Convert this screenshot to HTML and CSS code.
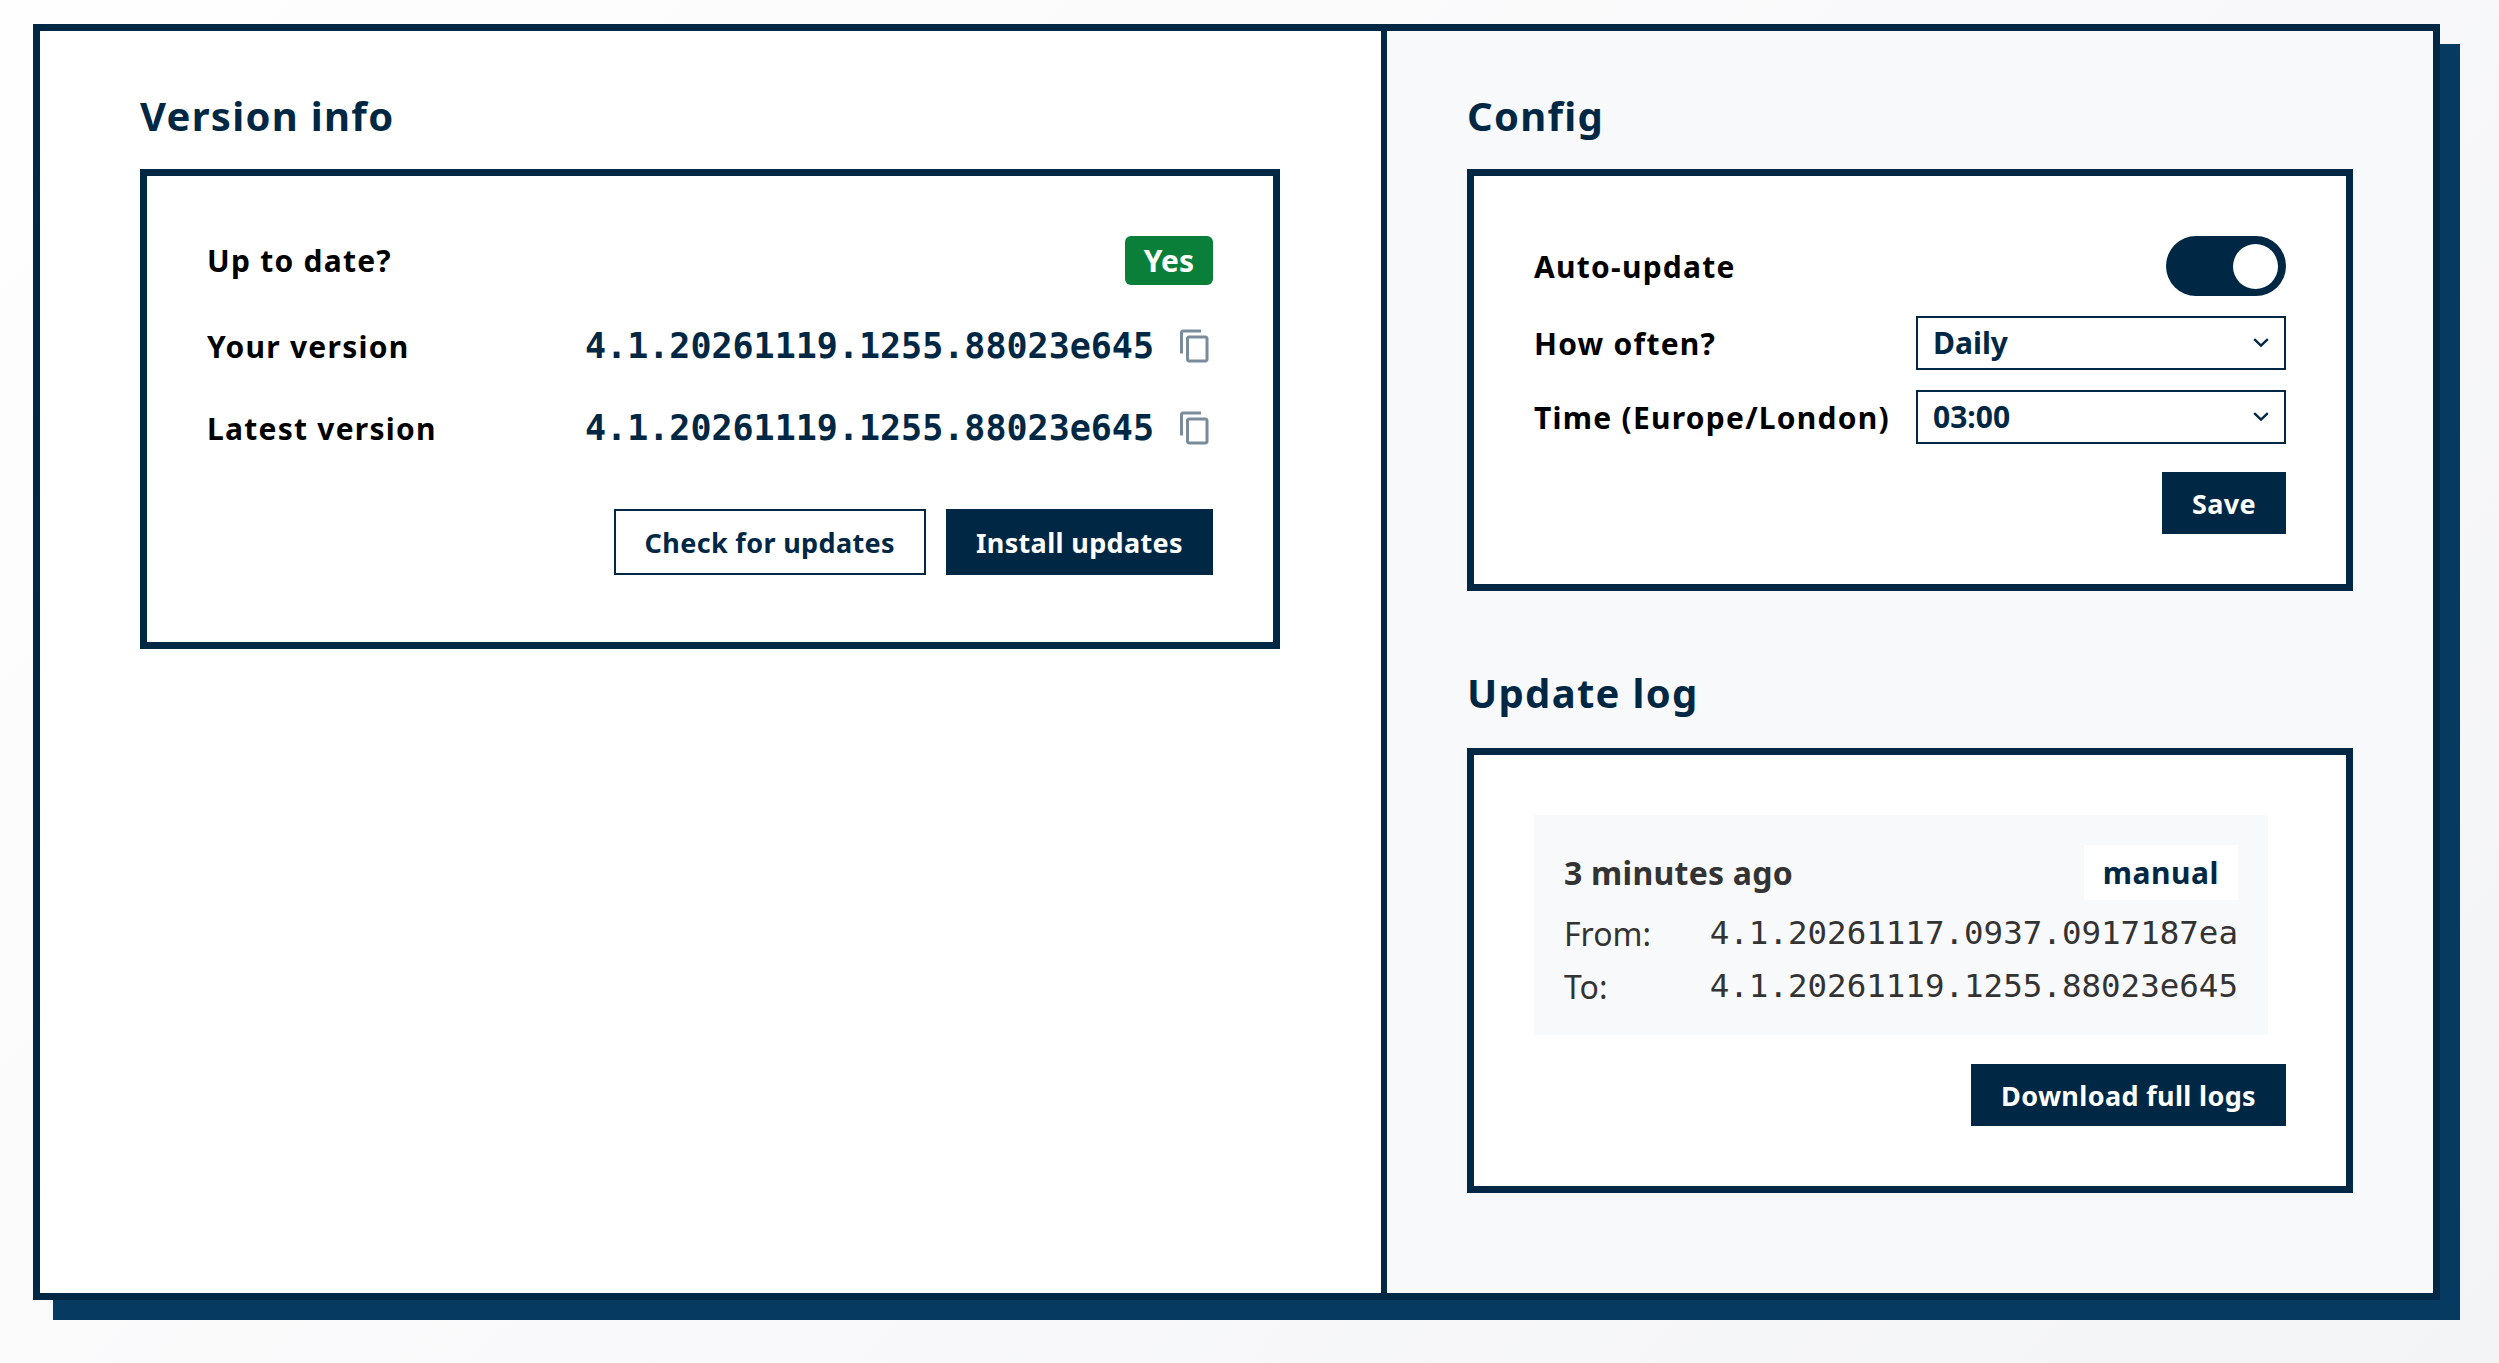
FILE: index.html
```html
<!DOCTYPE html>
<html lang="en">
<head>
<meta charset="utf-8">
<title>Updates</title>
<link rel="stylesheet" href="styles.css">
</head>
<body>
<main class="shell">
  <section class="pane pane-left">
    <h2 class="title">Version info</h2>
    <div class="box box-version">
      <div class="row row-first">
        <span class="label">Up to date?</span>
        <span class="badge">Yes</span>
      </div>
      <div class="row">
        <span class="label">Your version</span>
        <span class="value"><code class="mono">4.1.20261119.1255.88023e645</code>
          <svg class="copy" viewBox="0 0 24 24"><path d="M16 1H4c-1.1 0-2 .9-2 2v14h2V3h12V1zm3 4H8c-1.1 0-2 .9-2 2v14c0 1.1.9 2 2 2h11c1.1 0 2-.9 2-2V7c0-1.1-.9-2-2-2zm0 16H8V7h11v14z"/></svg>
        </span>
      </div>
      <div class="row">
        <span class="label">Latest version</span>
        <span class="value"><code class="mono">4.1.20261119.1255.88023e645</code>
          <svg class="copy" viewBox="0 0 24 24"><path d="M16 1H4c-1.1 0-2 .9-2 2v14h2V3h12V1zm3 4H8c-1.1 0-2 .9-2 2v14c0 1.1.9 2 2 2h11c1.1 0 2-.9 2-2V7c0-1.1-.9-2-2-2zm0 16H8V7h11v14z"/></svg>
        </span>
      </div>
      <div class="actions actions-version">
        <button class="btn btn-outline">Check for updates</button>
        <button class="btn btn-solid btn-tall">Install updates</button>
      </div>
    </div>
  </section>
  <section class="pane pane-right">
    <h2 class="title">Config</h2>
    <div class="box box-config">
      <div class="config-row config-toggle">
        <span class="label">Auto-update</span>
        <span class="toggle"><span class="knob"></span></span>
      </div>
      <div class="config-row config-gap">
        <span class="label">How often?</span>
        <span class="select"><span>Daily</span>
          <svg class="chev" viewBox="0 0 16 9"><path d="M1.2 1.2L8 7.6l6.8-6.4"/></svg></span>
      </div>
      <div class="config-row config-gap">
        <span class="label">Time (Europe/London)</span>
        <span class="select"><span>03:00</span>
          <svg class="chev" viewBox="0 0 16 9"><path d="M1.2 1.2L8 7.6l6.8-6.4"/></svg></span>
      </div>
      <div class="actions actions-config">
        <button class="btn btn-solid btn-save">Save</button>
      </div>
    </div>
    <h2 class="title title-log">Update log</h2>
    <div class="box box-log">
      <div class="log-card">
        <div class="log-head">
          <strong class="log-when">3 minutes ago</strong>
          <span class="tag">manual</span>
        </div>
        <div class="log-line"><span class="log-key">From:</span><code class="log-mono">4.1.20261117.0937.0917187ea</code></div>
        <div class="log-line log-line-to"><span class="log-key">To:</span><code class="log-mono">4.1.20261119.1255.88023e645</code></div>
      </div>
      <div class="actions actions-log">
        <button class="btn btn-solid btn-save">Download full logs</button>
      </div>
    </div>
  </section>
</main>
</body>
</html>
```
FILE: styles.css
```css
* { box-sizing: border-box; }
html, body { margin: 0; height: 100%; }
body {
  padding: 24px 59px 0 33px;
  background: linear-gradient(135deg, #fefefe 0%, #f3f4f6 100%);
  font-family: "Noto Sans", sans-serif;
  color: #002845;
  overflow: hidden;
}
.shell {
  display: flex;
  height: 1276px;
  border: 7px solid #002845;
  box-shadow: 20px 20px 0 #063a61;
}
.pane { min-width: 0; }
.pane-left {
  width: 1341px;
  flex: none;
  background: #fff;
  padding: 24px 101px 0 100px;
}
.pane-right {
  flex: 1;
  background: #f8f9fb;
  border-left: 6px solid #002845;
  padding: 24px 80px 0;
}
.title {
  margin: 0;
  height: 114px;
  padding-top: 33px;
  line-height: 56px;
  font-size: 40px;
  font-weight: 700;
  letter-spacing: 1.3px;
  color: #002845;
}
.title-log { height: 157px; padding-top: 74px; }
.box {
  background: #fff;
  border: 7px solid #002845;
  padding: 60px;
}
.box-version { height: 480px; }
.box-config { height: 422px; padding-bottom: 49px; }
.box-log { height: 445px; }
.row {
  display: flex;
  justify-content: space-between;
  align-items: center;
  height: 50px;
  margin-top: 32px;
}
.row-first { margin-top: 0; margin-bottom: 36px; height: 49px; }
.label {
  font-size: 30px;
  font-weight: 700;
  letter-spacing: 1.25px;
  color: #000;
}
.badge {
  display: flex;
  align-items: center;
  height: 49px;
  padding: 0 19px;
  background: #0a7f3a;
  border-radius: 6px;
  color: #fff;
  font-size: 30px;
  font-weight: 700;
}
.value { display: flex; align-items: center; gap: 23px; }
.mono {
  font-family: "DejaVu Sans Mono", monospace;
  font-weight: 700;
  font-size: 35px;
  color: #002845;
}
.copy { width: 36px; height: 36px; fill: #7a8b9b; flex: none; }
.actions { display: flex; justify-content: flex-end; gap: 20px; }
.actions-version { margin-top: 56px; }
.actions-config { margin-top: 28px; }
.actions-log { margin-top: 29px; }
.btn {
  font-family: "Noto Sans", sans-serif;
  font-size: 27px;
  font-weight: 700;
  letter-spacing: .35px;
  height: 61px;
  padding: 0 30px;
  border: 0;
}
.btn-solid { background: #002845; color: #fff; }
.btn-tall { height: 66px; }
.btn-outline {
  background: #fff;
  color: #002845;
  height: 66px;
  padding: 0 29px;
  border: 2px solid #002845;
}
.btn-save { height: 62px; }
.config-row {
  display: flex;
  justify-content: space-between;
  align-items: center;
}
.config-toggle { height: 60px; }
.config-gap { margin-top: 20px; height: 54px; }
.toggle {
  display: flex;
  justify-content: flex-end;
  align-items: center;
  width: 120px;
  height: 60px;
  padding-right: 8px;
  background: #002845;
  border-radius: 30px;
}
.knob { width: 45px; height: 45px; border-radius: 50%; background: #fff; }
.select {
  display: flex;
  align-items: center;
  justify-content: space-between;
  width: 370px;
  height: 54px;
  padding: 0 15px 2px 15px;
  border: 2px solid #002845;
  background: #fff;
  font-size: 30px;
  font-weight: 700;
  color: #002845;
}
.chev { width: 16px; height: 9px; fill: none; stroke: #002845; stroke-width: 2.4; margin-top: 1px; }
.log-card {
  width: 734px;
  height: 220px;
  padding: 30px;
  background: #f8f9fb;
}
.log-head {
  display: flex;
  justify-content: space-between;
  align-items: center;
  height: 55px;
}
.log-when { font-size: 32px; font-weight: 700; letter-spacing: .25px; color: #333; }
.tag {
  display: flex;
  align-items: center;
  height: 55px;
  padding: 0 19px;
  background: #fff;
  font-size: 30px;
  font-weight: 700;
  letter-spacing: .5px;
  color: #002845;
}
.log-line {
  display: flex;
  justify-content: space-between;
  align-items: center;
  height: 52px;
  margin-top: 7px;
  font-size: 32px;
  color: #333;
}
.log-line-to { margin-top: 1px; }
.log-mono { font-family: "DejaVu Sans Mono", monospace; font-size: 32.5px; color: #333; }
```
